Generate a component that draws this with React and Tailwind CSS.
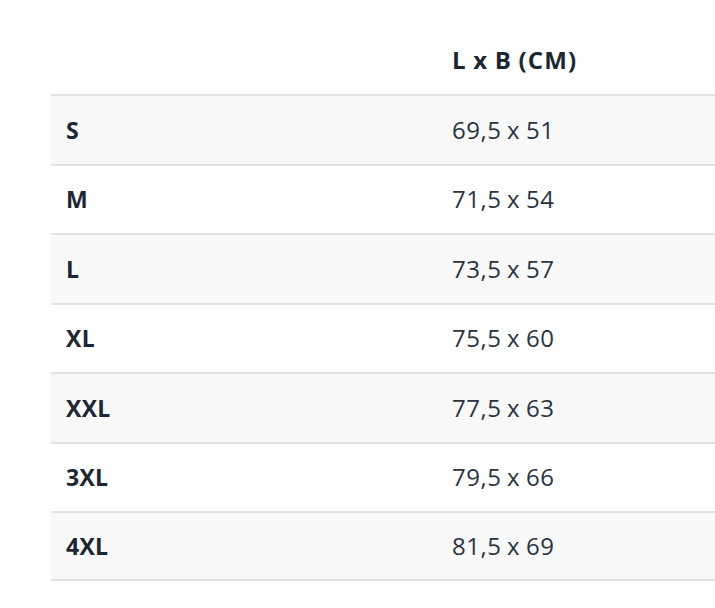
import React from 'react';

const rows = [
  ['S', '69,5 x 51'],
  ['M', '71,5 x 54'],
  ['L', '73,5 x 57'],
  ['XL', '75,5 x 60'],
  ['XXL', '77,5 x 63'],
  ['3XL', '79,5 x 66'],
  ['4XL', '81,5 x 69'],
];

export default function App() {
  return (
    <div className="min-h-screen bg-white pt-[25px] pl-[51px] text-[#1d2733]" style={{ fontFamily: '"Open Sans", Roboto, sans-serif' }}>
      <div className="grid grid-cols-[401px_1fr] h-[69px] items-center text-[24px] font-bold">
        <div />
        <div className="tracking-[1.2px] [word-spacing:-1px]">L x B (CM)</div>
      </div>
      {rows.map(([size, dims], i) => (
        <div
          key={size}
          className={`grid grid-cols-[401px_1fr] h-[69.5px] items-center border-t-2 border-[#e2e2e2] text-[23px] ${i % 2 === 0 ? 'bg-[#f8f8f8]' : 'bg-white'} ${i === rows.length - 1 ? 'border-b-2' : ''}`}
        >
          <div className="pl-[15px] font-bold tracking-[0.3px]">{size}</div>
          <div className="text-[#2a3440] text-[24px] tracking-[0.5px] [word-spacing:-1px]">{dims}</div>
        </div>
      ))}
    </div>
  );
}
